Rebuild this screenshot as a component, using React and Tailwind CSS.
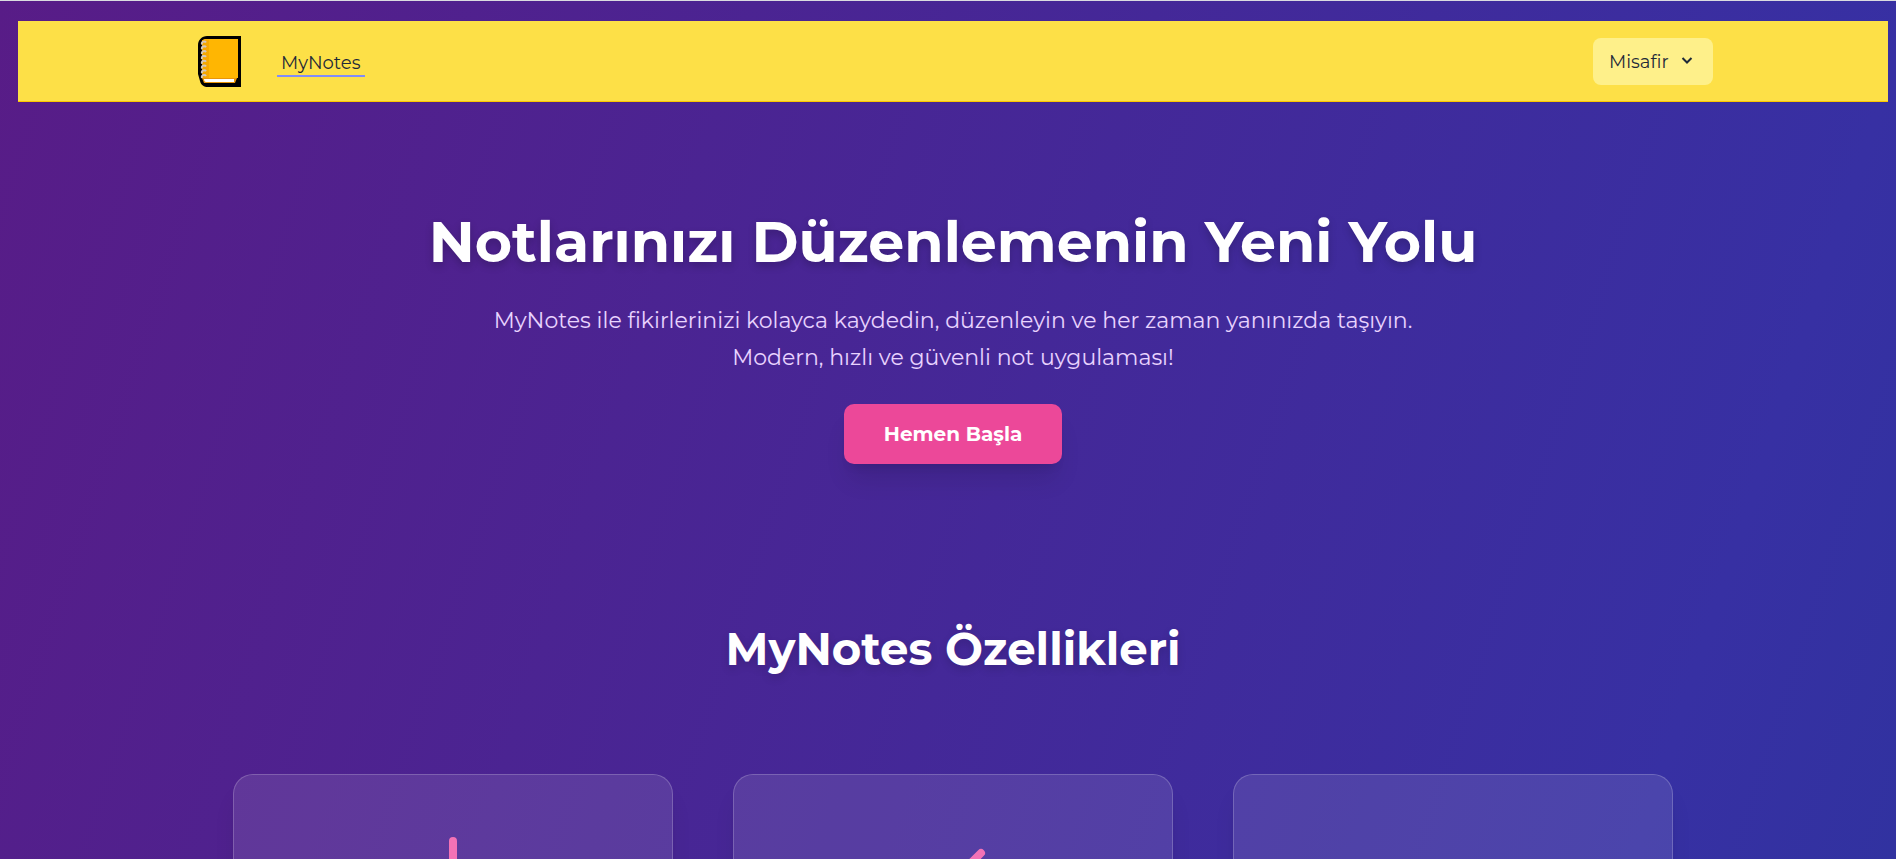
import React from "react";

function NotebookLogo() {
  return (
    <svg viewBox="0 0 43 51" className="h-[51px] w-[43px]" aria-hidden="true">
      <path d="M9 0H43V51H10C6 51 3 49 2 45L0 38V9C0 4 4 0 9 0Z" fill="#000" />
      <path d="M7 3H40V42H7C5 42 4 41 4 39V7C4 5 5 3 7 3Z" fill="#ffb602" />
      <path d="M4 4H11V42H4Z" fill="#f5a700" />
      <path d="M4 42L6 47H37L39 42Z" fill="#e8950a" />
      <path d="M6 43H36V46H8C7 46 6 45 6 43Z" fill="#fff" />
      <path
        d="M4 8.500C3 5 7 5 8 6.500M4 13.300C3 9.800 7 9.800 8 11.300M4 18.100C3 14.600 7 14.600 8 16.100M4 22.900C3 19.400 7 19.400 8 20.900M4 27.700C3 24.200 7 24.200 8 25.700M4 32.500C3 29 7 29 8 30.500M4 37.300C3 33.800 7 33.800 8 35.300M4 42C3 38.500 7 38.500 8 40"
        fill="none"
        stroke="#d3c8bd"
        strokeWidth="2"
      />
    </svg>
  );
}

function Header() {
  return (
    <header className="border-b border-yellow-400 bg-[#fde047]">
      <div className="mx-auto flex h-20 max-w-[1536px] items-center justify-between px-2">
        <nav className="flex items-center">
          <a href="#" aria-label="MyNotes" className="ml-[5px] block">
            <NotebookLogo />
          </a>
          <a
            href="#"
            className="mt-1 ml-9 border-b-2 border-[#818cf8] px-1 pt-0.5 text-lg leading-6 text-gray-800"
          >
            MyNotes
          </a>
        </nav>
        <button
          type="button"
          className="flex h-[47px] w-[120px] items-center justify-between rounded-lg bg-[#fef08a] pt-0.5 pr-[19px] pl-4 text-lg text-gray-800"
        >
          Misafir
          <svg viewBox="0 0 14 14" className="size-[14px]" fill="none" stroke="currentColor" strokeWidth="2" aria-hidden="true">
            <path d="M2.500 3L7 7.500L11.500 3" />
          </svg>
        </button>
      </div>
    </header>
  );
}

const features = [
  { name: "add", path: "M12 4v16m8-8H4" },
  { name: "check", path: "M5 13l4 4L19 7" },
  { name: "list", path: "M6 12h12M6 17h12" },
];

function FeatureCard({ path }) {
  return (
    <li className="flex h-96 justify-center rounded-[20px] border border-white/20 bg-white/10 pt-[50px] shadow-xl">
      <svg
        viewBox="0 0 24 24"
        className="size-24 text-[#f472b6]"
        fill="none"
        stroke="currentColor"
        strokeWidth="2"
        strokeLinecap="round"
        strokeLinejoin="round"
        aria-hidden="true"
      >
        <path d={path} />
      </svg>
    </li>
  );
}

export default function App() {
  return (
    <div className="h-screen overflow-hidden border-t border-[#dadce0] bg-[linear-gradient(108deg,#581c87_0%,#3730a3_88%,#3132a0_100%)] pt-5 pr-2 pl-[18px] font-[Montserrat,Inter,sans-serif]">
      <Header />
      <main>
        <section className="flex flex-col items-center pt-[108px] text-center">
          <h1 className="text-[57px] leading-[64px] font-bold text-white [text-shadow:0_4px_8px_rgb(0_0_0/0.2)]">
            Notlarınızı Düzenlemenin Yeni Yolu
          </h1>
          <p className="mt-7 text-[22px] leading-[37px] text-purple-200">
            MyNotes ile fikirlerinizi kolayca kaydedin, düzenleyin ve her zaman yanınızda taşıyın.
            <br />
            Modern, hızlı ve güvenli not uygulaması!
          </p>
          <button
            type="button"
            className="mt-7 h-[60px] w-[218px] rounded-[10px] bg-[#ec4899] text-xl font-bold text-white shadow-xl"
          >
            Hemen Başla
          </button>
        </section>
        <section className="pt-[157px]">
          <h2 className="text-center text-[45px] leading-[56px] font-bold text-white [text-shadow:0_4px_8px_rgb(0_0_0/0.15)]">
            MyNotes Özellikleri
          </h2>
          <ul className="mx-auto mt-[97px] grid max-w-[1440px] grid-cols-3 gap-[60px]">
            {features.map((f) => (
              <FeatureCard key={f.name} path={f.path} />
            ))}
          </ul>
        </section>
      </main>
    </div>
  );
}
